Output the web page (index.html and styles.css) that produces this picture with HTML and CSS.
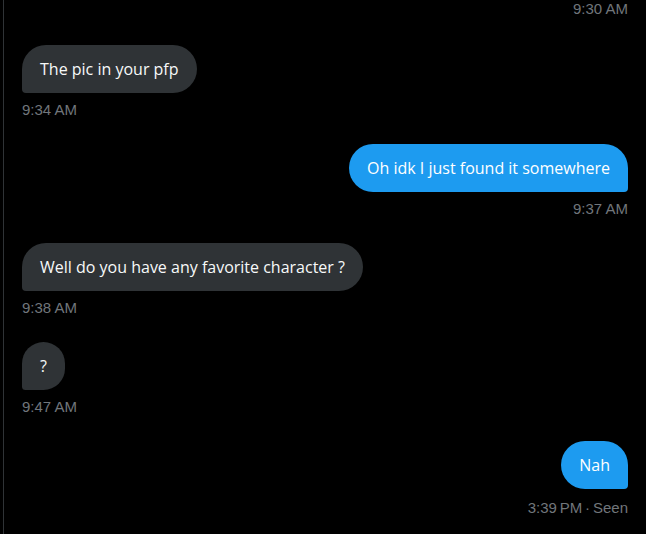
FILE: index.html
```html
<!DOCTYPE html>
<html>
<head>
<meta charset="utf-8">
<link rel="stylesheet" href="styles.css">
</head>
<body>
<div class="thread">
  <div class="msg out first">
    <div class="time">9:30 AM</div>
  </div>
  <div class="msg in">
    <div class="bubble">The pic in your pfp</div>
    <div class="time">9:34 AM</div>
  </div>
  <div class="msg out">
    <div class="bubble">Oh idk I just found it somewhere</div>
    <div class="time">9:37 AM</div>
  </div>
  <div class="msg in">
    <div class="bubble">Well do you have any favorite character ?</div>
    <div class="time">9:38 AM</div>
  </div>
  <div class="msg in">
    <div class="bubble">?</div>
    <div class="time">9:47 AM</div>
  </div>
  <div class="msg out">
    <div class="bubble">Nah</div>
    <div class="time seen">3:39 PM · Seen</div>
  </div>
</div>
</body>
</html>
```
FILE: styles.css
```css
html, body {
  margin: 0;
  padding: 0;
  background: #000;
  height: 100%;
}
body {
  font-family: "Open Sans", "Liberation Sans", Arial, sans-serif;
  overflow: hidden;
}
.thread {
  margin-left: 3px;
  border-left: 1px solid #2f3336;
  min-height: 100%;
  box-sizing: border-box;
  padding: 0 18px 0 18px;
  display: flex;
  flex-direction: column;
  gap: 24px;
}
.msg {
  display: flex;
  flex-direction: column;
  gap: 7px;
}
.msg.first { margin-top: -1px; margin-bottom: 2px; }
.msg.in { align-items: flex-start; }
.msg.out { align-items: flex-end; }
.bubble {
  height: 48px;
  box-sizing: border-box;
  padding: 0 18px 0 18px;
  display: flex;
  align-items: center;
  font-size: 16px;
  font-weight: 500;
  color: #f7f9f9;
  border-radius: 24px;
}
.in .bubble {
  background: #2f3336;
  border-bottom-left-radius: 4px;
}
.out .bubble {
  background: #1d9bf0;
  color: #fff;
  border-bottom-right-radius: 4px;
}
.time {
  font-size: 15px;
  line-height: 20px;
  color: #71767b;
  font-family: "Liberation Sans", Arial, sans-serif;
}
.time.seen { word-spacing: -1.3px; margin-top: 2px; }
```
